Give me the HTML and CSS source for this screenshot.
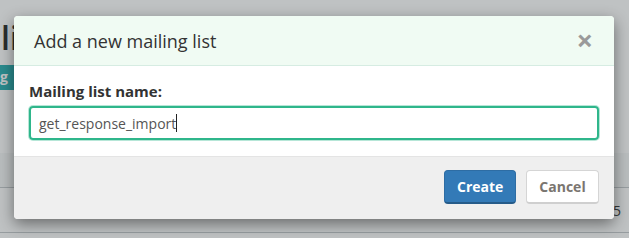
FILE: index.html
```html
<!DOCTYPE html>
<html lang="en">
<head>
<meta charset="utf-8">
<title>Add a new mailing list</title>
<link rel="stylesheet" href="styles.css">
</head>
<body>
<div class="page">
  <h1 class="page-title">li</h1>
  <div class="toolbar"><span class="teal-btn">g</span></div>
  <div class="table">
    <div class="row row-head"></div>
    <div class="row row-body"><span class="cell-num">5</span></div>
    <div class="row row-tail"></div>
  </div>
</div>
<div class="backdrop"></div>
<div class="modal">
  <div class="modal-header">
    <h4 class="modal-title">Add a new mailing list</h4>
    <span class="close">&times;</span>
  </div>
  <div class="modal-body">
    <label class="label">Mailing list name:</label>
    <div class="field"><span class="field-text">get_response_import</span><span class="caret"></span></div>
  </div>
  <div class="modal-footer">
    <button class="btn btn-primary">Create</button>
    <button class="btn btn-default">Cancel</button>
  </div>
</div>
</body>
</html>
```
FILE: styles.css
```css
html, body {
  margin: 0;
  padding: 0;
}
body {
  width: 629px;
  height: 238px;
  overflow: hidden;
  background: #ffffff;
  font-family: "Open Sans", "Noto Sans", sans-serif;
  color: #333;
  position: relative;
}
.page {
  padding-top: 20px;
}
.page-title {
  margin: 0;
  padding-left: 1px;
  font-size: 32px;
  line-height: 36px;
  font-weight: 600;
  color: #333;
}
.toolbar {
  margin-top: 9px;
  height: 25px;
}
.teal-btn {
  display: inline-block;
  width: 60px;
  height: 25px;
  background: #34b3b6;
  color: #fff;
  font-weight: 700;
  font-size: 14px;
  line-height: 24px;
}
.table {
  margin-top: 63px;
}
.row {
  border-top: 1px solid #c8cdd0;
  display: flex;
  justify-content: flex-end;
  align-items: center;
}
.row-head {
  border-top: none;
  height: 34px;
  background: #f7f8f9;
}
.row-body {
  height: 44px;
}
.row-tail {
  height: 5px;
}
.cell-num {
  font-size: 14px;
  color: #444;
  padding-right: 8px;
}
.backdrop {
  position: absolute;
  inset: 0;
  background: rgba(20, 30, 35, 0.27);
}
.modal {
  position: absolute;
  left: 14px;
  top: 16px;
  width: 600px;
  background: #fff;
  border-radius: 4px;
  overflow: hidden;
  box-shadow: 0 5px 15px rgba(0, 0, 0, 0.45);
}
.modal-header {
  display: flex;
  align-items: center;
  justify-content: space-between;
  height: 49px;
  padding: 0 21px 0 20px;
  background: #f0fbf3;
  border-bottom: 1px solid #d6ece2;
}
.modal-title {
  margin: 0;
  font-size: 18px;
  font-weight: 400;
  color: #333;
}
.close {
  font-size: 29px;
  font-weight: 700;
  color: #9a9a9a;
  line-height: 1;
  margin-top: -2px;
}
.modal-body {
  padding: 15px 15px 16px;
}
.label {
  display: block;
  font-size: 15px;
  font-weight: 700;
  line-height: 20px;
  margin-bottom: 5px;
  color: #333;
}
.field {
  display: flex;
  align-items: center;
  height: 30px;
  padding: 0 8px;
  border: 2px solid #2fb68b;
  border-radius: 4px;
  box-shadow: 0 0 0 1px rgba(47, 182, 139, 0.35);
  font-size: 14px;
  color: #555;
}
.caret {
  display: inline-block;
  width: 1px;
  height: 18px;
  background: #222;
}
.modal-footer {
  display: flex;
  justify-content: flex-end;
  gap: 10px;
  padding: 13px 15px 15px;
  background: #efefef;
  border-top: 1px solid #e4e4e4;
}
.btn {
  font-family: "Open Sans", "Noto Sans", sans-serif;
  font-size: 14px;
  font-weight: 700;
  height: 34px;
  padding: 0 12px;
  border-radius: 4px;
  cursor: pointer;
}
.btn-primary {
  width: 72px;
  background: #337ab7;
  color: #fff;
  border: 1px solid #2e6da4;
  border-bottom: 2px solid #265b89;
}
.btn-default {
  width: 73px;
  background: #fff;
  color: #7a7570;
  border: 1px solid #d5d5d5;
  border-bottom: 2px solid #cfcfcf;
}
```
